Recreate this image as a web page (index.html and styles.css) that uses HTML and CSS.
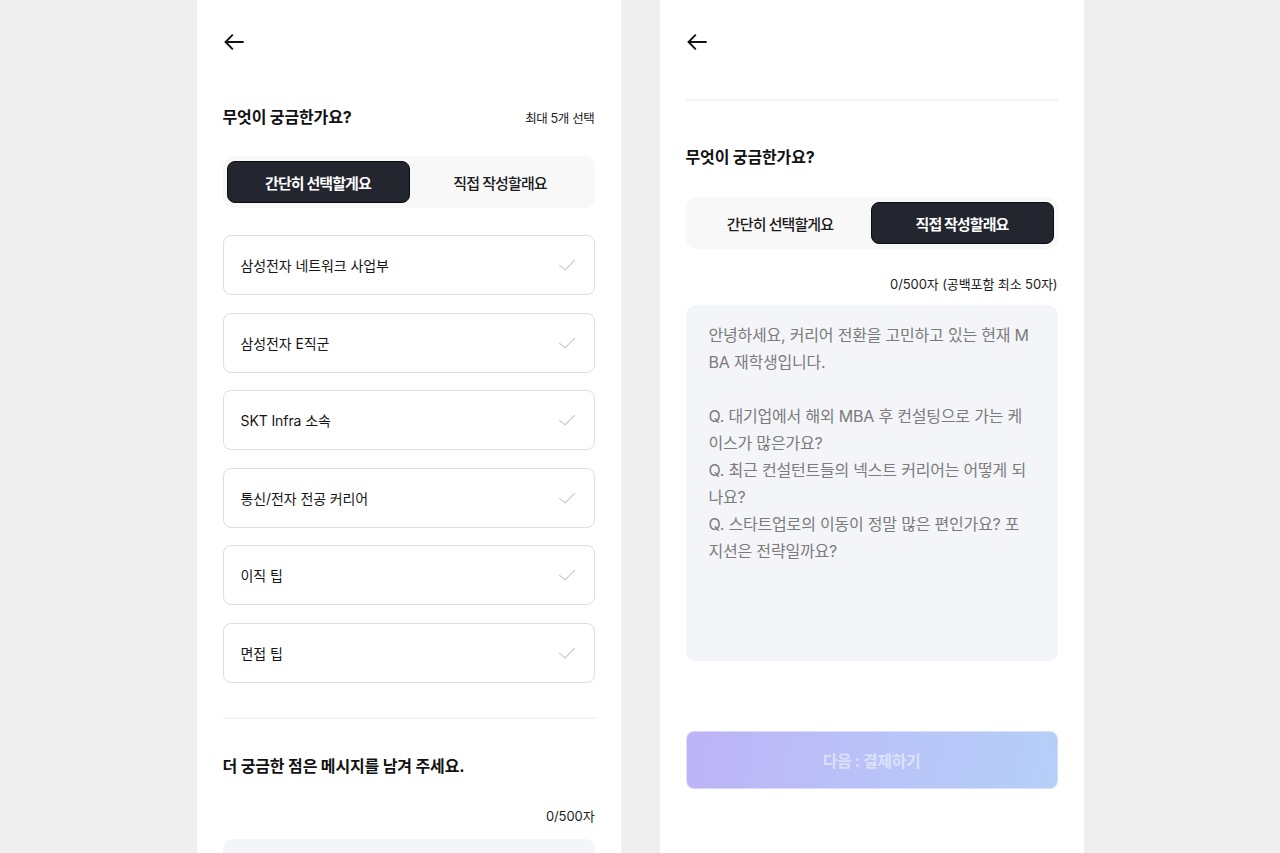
FILE: index.html
```html
<!DOCTYPE html>
<html lang="ko">
<head>
    <meta charset="UTF-8">
    <meta name="viewport" content="width=device-width, initial-scale=1.0">
    <title>질문 작성</title>
    <link rel="stylesheet" href="styles.css">
</head>
<body>
    <!-- 간단히 선택 -->
    <section class="panel">
        <div class="topbar">
            <button class="back-btn" aria-label="뒤로">
                <svg width="20" height="16" viewBox="0 0 20 16" fill="none" stroke="#111" stroke-width="1.9" stroke-linecap="round" stroke-linejoin="round">
                    <path d="M19 8H1.6"/>
                    <path d="M8.3 1.2L1.6 8l6.7 6.8"/>
                </svg>
            </button>
        </div>

        <div class="section-head">
            <h2 class="section-title">무엇이 궁금한가요?</h2>
            <span class="section-note">최대 5개 선택</span>
        </div>

        <div class="segment">
            <button class="segment-btn active">간단히 선택할게요</button>
            <button class="segment-btn">직접 작성할래요</button>
        </div>

        <ul class="option-list">
            <li class="option">삼성전자 네트워크 사업부<span class="check"></span></li>
            <li class="option">삼성전자 E직군<span class="check"></span></li>
            <li class="option">SKT Infra 소속<span class="check"></span></li>
            <li class="option">통신/전자 전공 커리어<span class="check"></span></li>
            <li class="option">이직 팁<span class="check"></span></li>
            <li class="option">면접 팁<span class="check"></span></li>
        </ul>

        <hr class="divider divider-bottom">

        <h2 class="section-title more-title">더 궁금한 점은 메시지를 남겨 주세요.</h2>
        <div class="counter counter-left">0/500자</div>
        <div class="memo memo-short"></div>
    </section>

    <!-- 직접 작성 -->
    <section class="panel">
        <div class="topbar">
            <button class="back-btn" aria-label="뒤로">
                <svg width="20" height="16" viewBox="0 0 20 16" fill="none" stroke="#111" stroke-width="1.9" stroke-linecap="round" stroke-linejoin="round">
                    <path d="M19 8H1.6"/>
                    <path d="M8.3 1.2L1.6 8l6.7 6.8"/>
                </svg>
            </button>
        </div>

        <hr class="divider divider-top">

        <div class="section-head head-right">
            <h2 class="section-title">무엇이 궁금한가요?</h2>
        </div>

        <div class="segment segment-right">
            <button class="segment-btn">간단히 선택할게요</button>
            <button class="segment-btn active">직접 작성할래요</button>
        </div>

        <div class="counter counter-right">0/500자 (공백포함 최소 50자)</div>
        <div class="memo memo-tall">
            <p class="memo-text">안녕하세요, 커리어 전환을 고민하고 있는 현재 M<br>BA 재학생입니다.<br><br>Q. 대기업에서 해외 MBA 후 컨설팅으로 가는 케<br>이스가 많은가요?<br>Q. 최근 컨설턴트들의 넥스트 커리어는 어떻게 되<br>나요?<br>Q. 스타트업로의 이동이 정말 많은 편인가요? 포<br>지션은 전략일까요?</p>
        </div>

        <button class="next-btn" disabled>다음 : 결제하기</button>
    </section>
</body>
</html>
```

FILE: styles.css
```css
* {
    box-sizing: border-box;
}
html, body {
    margin: 0;
    height: 100%;
}
body {
    display: flex;
    justify-content: center;
    gap: 39px;
    background-color: #efefef;
    font-family: Inter, "Noto Sans CJK KR", sans-serif;
    color: #111;
    overflow: hidden;
}
button {
    font-family: inherit;
    border: none;
    background: none;
    padding: 0;
    cursor: pointer;
}
.panel {
    width: 424px;
    height: 853px;
    background-color: #fff;
    padding: 0 26px;
    overflow: hidden;
}
.topbar {
    height: 84px;
    display: flex;
    align-items: center;
}
.back-btn {
    display: flex;
    margin-left: 1px;
}
.divider {
    border: none;
    height: 2px;
    background-color: #f3f3f3;
    margin: 0;
}
.divider-top {
    margin-top: 15px;
}
.divider-bottom {
    margin-top: 34px;
}
.section-head {
    display: flex;
    justify-content: space-between;
    align-items: center;
    height: 24px;
    margin-top: 21px;
}
.head-right {
    margin-top: 44px;
}
.section-title {
    margin: 0;
    font-size: 16px;
    font-weight: 700;
    line-height: 24px;
    letter-spacing: -0.15px;
}
.section-note {
    font-size: 12.5px;
    letter-spacing: -0.35px;
    color: #222;
}
.segment {
    display: flex;
    height: 52px;
    margin-top: 27px;
    padding: 5px 4px;
    background-color: #f8f8f8;
    border-radius: 10px;
}
.segment-right {
    margin-top: 28px;
}
.segment-btn {
    flex: 1;
    height: 42px;
    border-radius: 8px;
    font-size: 15px;
    font-weight: 500;
    letter-spacing: -0.9px;
    color: #1b1b1b;
}
.segment-btn.active {
    background-color: #23252f;
    border: 1px solid #0c0d12;
    color: #fff;
    font-weight: 700;
}
.option-list {
    list-style: none;
    margin: 27px 0 0;
    padding: 0;
    display: flex;
    flex-direction: column;
    gap: 17.6px;
}
.option {
    height: 60px;
    display: flex;
    align-items: center;
    justify-content: space-between;
    padding: 0 18px 0 17px;
    border: 1.5px solid #dedede;
    border-radius: 8px;
    font-size: 14px;
    letter-spacing: -0.1px;
    color: #161616;
}
.check {
    width: 17px;
    height: 10px;
    position: relative;
}
.check::before {
    content: "";
    position: absolute;
    left: 4px;
    top: -4px;
    width: 7px;
    height: 13px;
    border-right: 1.5px solid #c6c6c6;
    border-bottom: 1.5px solid #c6c6c6;
    transform: rotate(45deg) skewY(-8deg);
}
.more-title {
    margin-top: 35px;
}
.counter {
    text-align: right;
    font-size: 13px;
    line-height: 18px;
    color: #222;
}
.counter-left {
    margin-top: 29px;
    letter-spacing: -0.1px;
}
.counter-right {
    margin-top: 26px;
    letter-spacing: -0.1px;
}
.memo {
    background-color: #f4f5f9;
    border-radius: 10px;
}
.memo-short {
    margin-top: 14px;
    height: 200px;
}
.memo-tall {
    margin-top: 12px;
    height: 356px;
    padding: 17px 23px;
}
.memo-text {
    margin: 0;
    font-size: 16px;
    line-height: 27px;
    letter-spacing: -0.2px;
    color: #7b7b7b;
    white-space: nowrap;
}
.next-btn {
    display: block;
    width: 100%;
    height: 58px;
    margin-top: 70px;
    border-radius: 8px;
    border: 1px solid rgba(255, 255, 255, 0.45);
    background: linear-gradient(100deg, #bdb3f7 0%, #b9c4f8 55%, #b5cff8 100%);
    font-size: 16px;
    font-weight: 700;
    letter-spacing: -0.4px;
    color: rgba(255, 255, 255, 0.5);
    cursor: default;
}
```
